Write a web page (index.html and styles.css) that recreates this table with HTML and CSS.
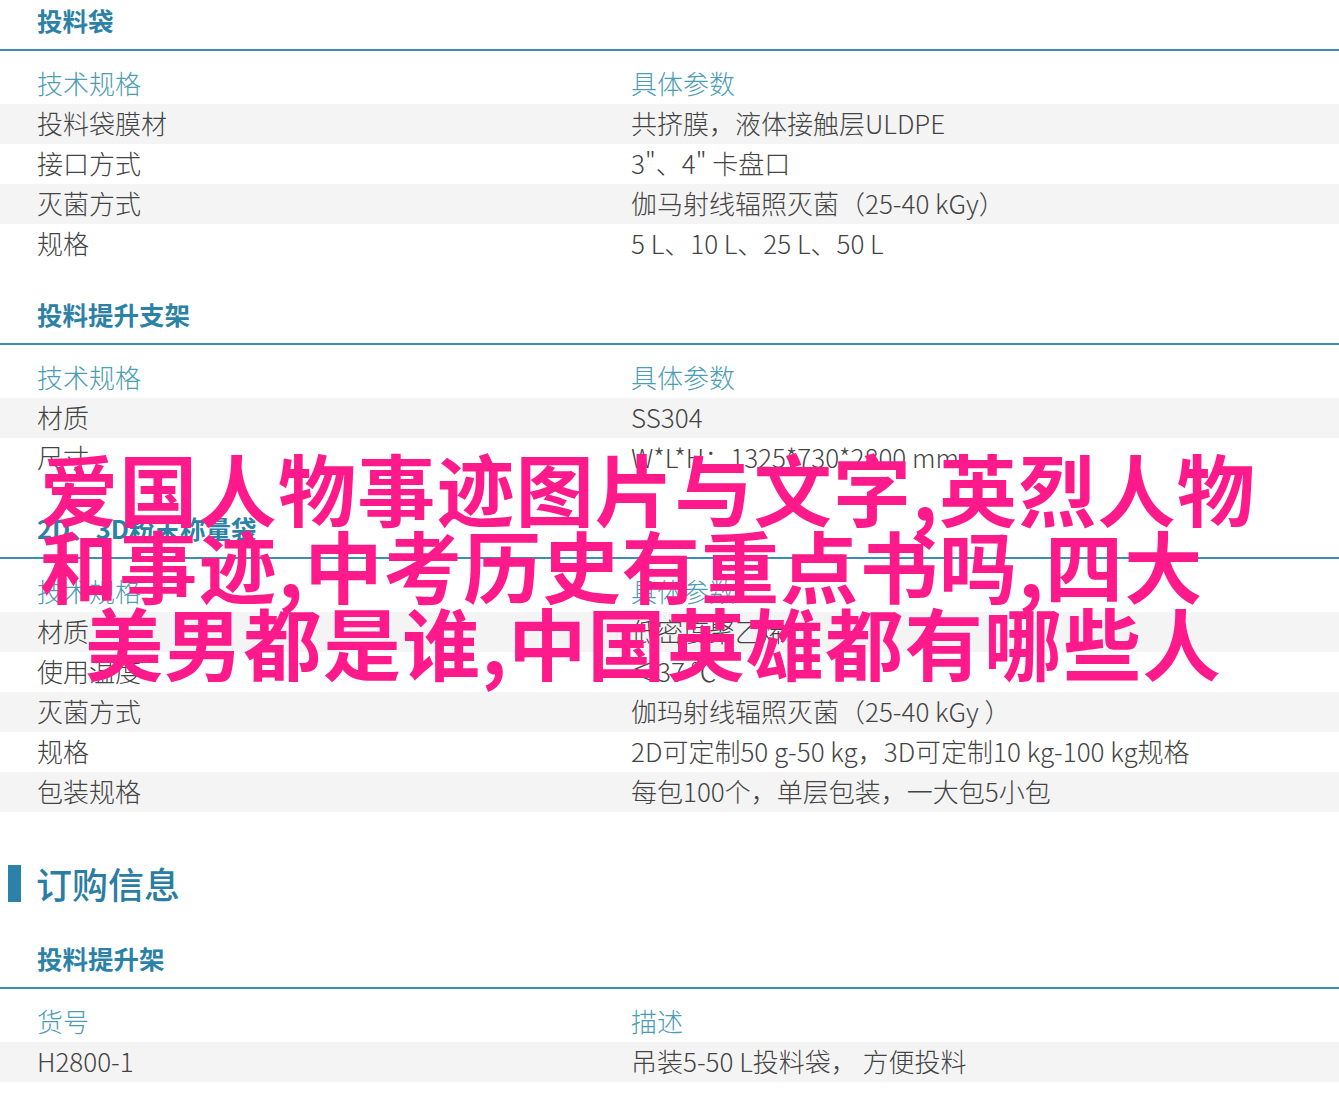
FILE: index.html
```html
<!DOCTYPE html>
<html lang="zh-CN">
<head>
    <meta charset="UTF-8">
    <meta name="viewport" content="width=device-width, initial-scale=1.0">
    <title>技术规格</title>
    <link rel="stylesheet" href="styles.css">
</head>
<body>
    <div class="page">
        <div class="section first">
            <h3 class="title">投料袋</h3>
            <table class="spec">
                <tr class="head"><td>技术规格</td><td>具体参数</td></tr>
                <tr class="odd"><td>投料袋膜材</td><td>共挤膜，液体接触层ULDPE</td></tr>
                <tr><td>接口方式</td><td>3"、4" 卡盘口</td></tr>
                <tr class="odd"><td>灭菌方式</td><td>伽马射线辐照灭菌（25-40 kGy）</td></tr>
                <tr><td>规格</td><td>5 L、10 L、25 L、50 L</td></tr>
            </table>
        </div>

        <div class="section">
            <h3 class="title">投料提升支架</h3>
            <table class="spec">
                <tr class="head"><td>技术规格</td><td>具体参数</td></tr>
                <tr class="odd"><td>材质</td><td>SS304</td></tr>
                <tr><td>尺寸</td><td>W*L*H：1325*730*2800 mm</td></tr>
            </table>
        </div>

        <div class="section">
            <h3 class="title">2D、3D粉末称量袋</h3>
            <table class="spec">
                <tr class="head"><td>技术规格</td><td>具体参数</td></tr>
                <tr class="odd"><td>材质</td><td>低密度聚乙烯</td></tr>
                <tr><td>使用温度</td><td>≤37 ℃</td></tr>
                <tr class="odd"><td>灭菌方式</td><td>伽玛射线辐照灭菌（25-40 kGy ）</td></tr>
                <tr><td>规格</td><td>2D可定制50 g-50 kg，3D可定制10 kg-100 kg规格</td></tr>
                <tr class="odd"><td>包装规格</td><td>每包100个，单层包装，一大包5小包</td></tr>
            </table>
        </div>

        <h2 class="heading"><span class="bar"></span>订购信息</h2>

        <div class="section order">
            <h3 class="title">投料提升架</h3>
            <table class="spec">
                <tr class="head"><td>货号</td><td>描述</td></tr>
                <tr class="odd"><td>H2800-1</td><td>吊装5-50 L投料袋， 方便投料</td></tr>
            </table>
        </div>
    </div>

    <div class="overlay">
        <span class="line">爱国人物事迹图片与文字,英烈人物</span>
        <span class="line">和事迹,中考历史有重点书吗,四大</span>
        <span class="line indent">美男都是谁,中国英雄都有哪些人</span>
    </div>
</body>
</html>
```

FILE: styles.css
```css
body {
    margin: 0;
    background: #fff;
    font-family: "Noto Sans CJK SC", "Noto Sans", sans-serif;
    color: #444;
}
.page {
    position: relative;
}
.section {
    margin-top: 30px;
}
.section.first {
    margin-top: 0;
}
.section.order {
    margin-top: 35px;
}
.title {
    margin: 0;
    padding: 0 0 9px 37px;
    height: 40px;
    line-height: 40px;
    font-size: 25.5px;
    font-weight: 700;
    color: #2b82a6;
    border-bottom: 2px solid #3a8db3;
}
.spec {
    width: 100%;
    border-collapse: collapse;
    margin-top: 13px;
}
.spec td {
    height: 38px;
    padding: 0 0 2px 37px;
    font-size: 26px;
    font-weight: 300;
    line-height: 38px;
    white-space: nowrap;
}
.spec td:first-child {
    width: 594px;
}
.spec td:last-child {
    padding-left: 0;
}
.spec .head td {
    color: #4b9db4;
}
.spec .odd td {
    background: #f4f4f4;
}
.heading {
    display: flex;
    align-items: center;
    margin: 51px 0 0;
    height: 40px;
    font-size: 36px;
    font-weight: 500;
    color: #2b7ea3;
}
.bar {
    width: 13px;
    height: 37px;
    margin: 0 15px 0 8px;
    background: #2a82aa;
}
.overlay {
    position: absolute;
    top: 449px;
    left: 40px;
    font-size: 78px;
    line-height: 77px;
    letter-spacing: 1.3px;
    font-weight: 700;
    color: #ff1a8c;
    white-space: nowrap;
}
.overlay .line {
    display: block;
}
.overlay .indent {
    padding-left: 45px;
}
```
